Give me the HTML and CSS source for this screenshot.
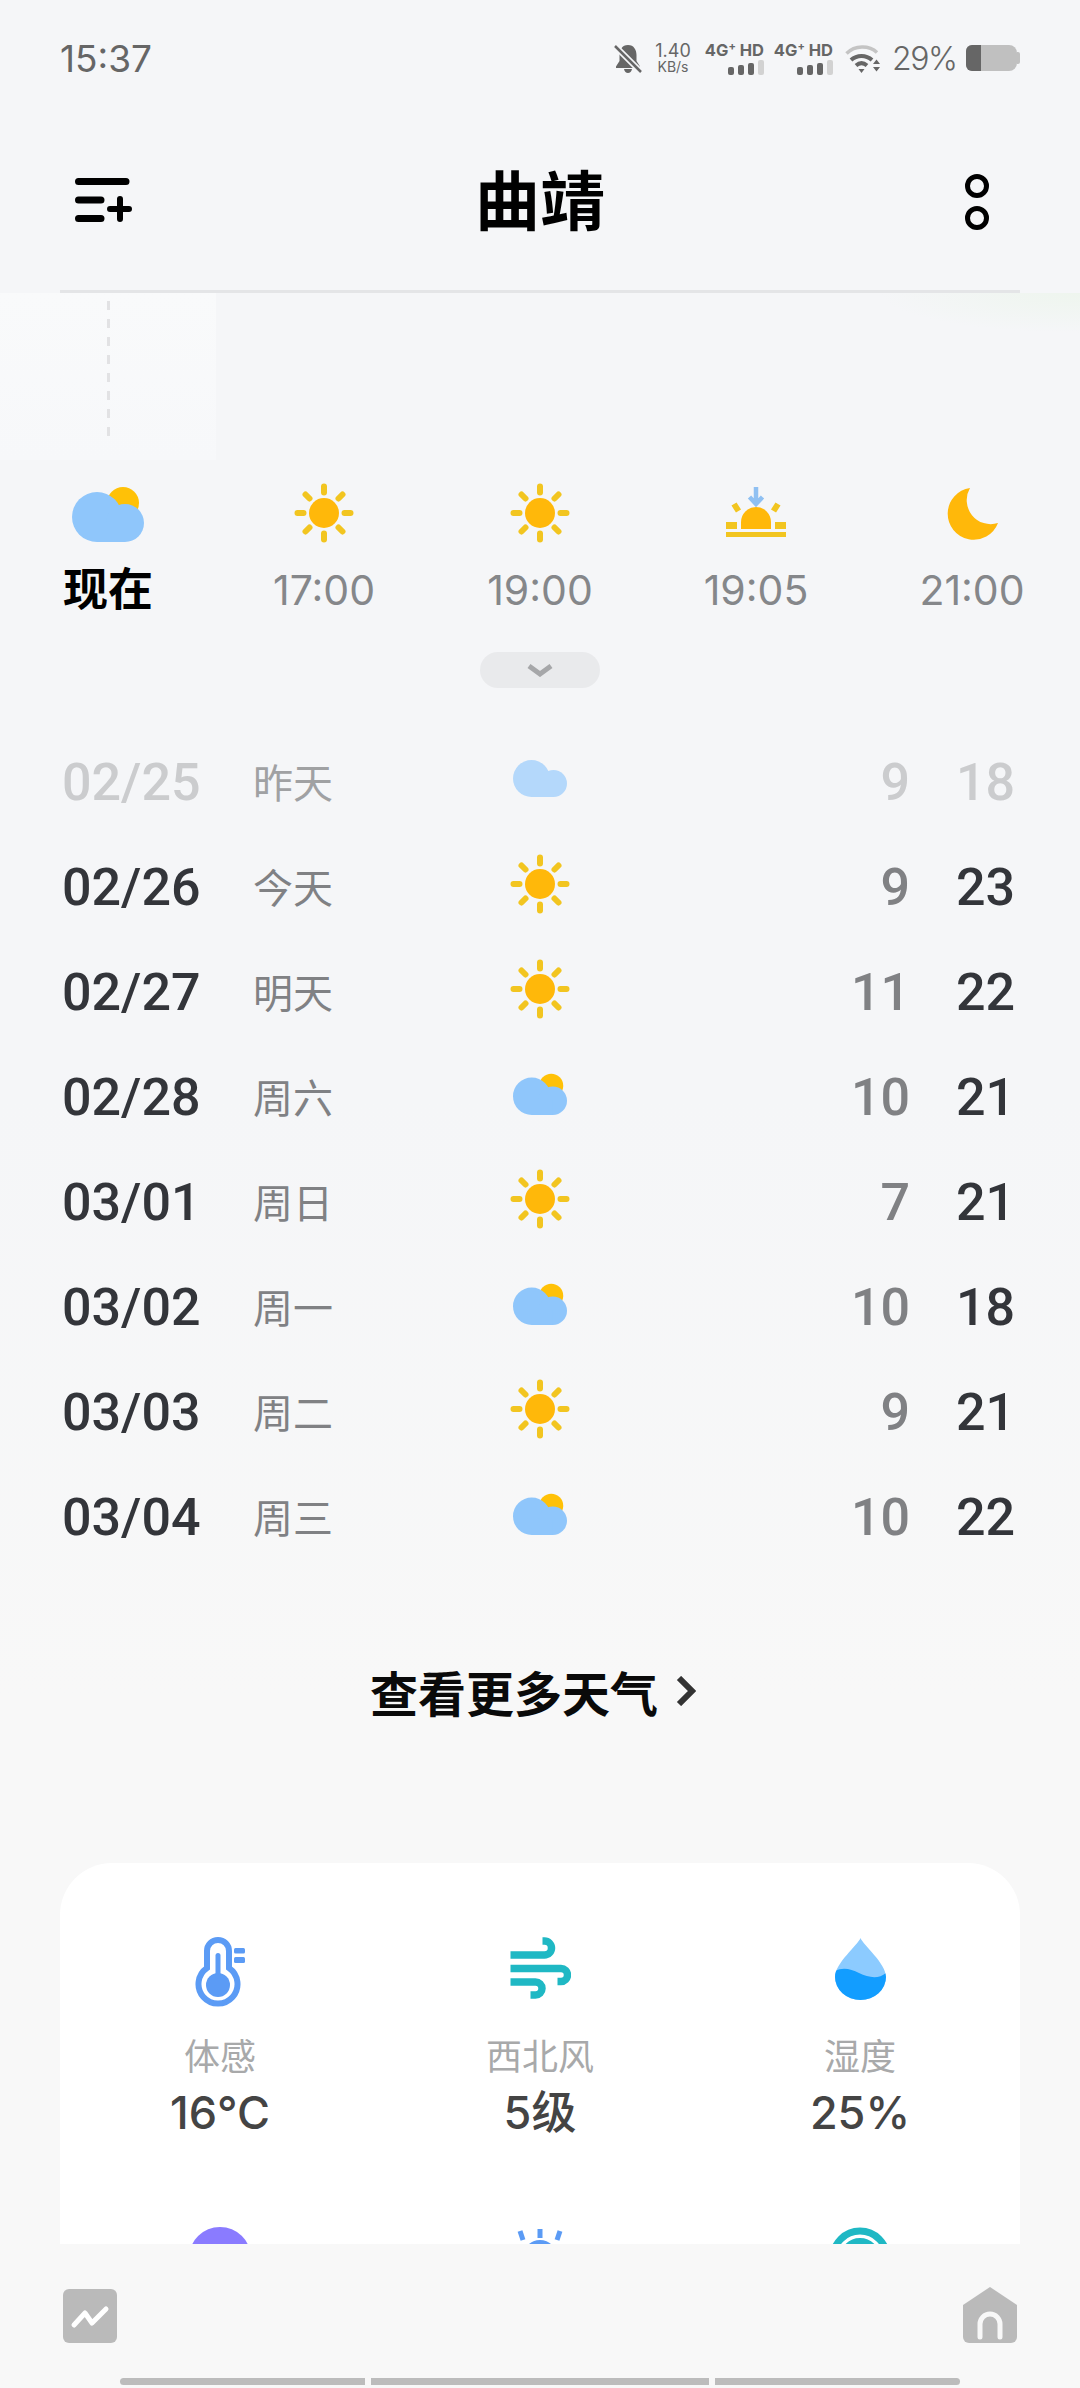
FILE: index.html
```html
<!DOCTYPE html>
<html lang="zh-CN">
<head>
    <meta charset="UTF-8">
    <meta name="viewport" content="width=device-width, initial-scale=1.0">
    <title>曲靖</title>
    <link rel="stylesheet" href="styles.css">
</head>
<body>
    <!-- shared weather glyphs -->
    <svg class="defs" width="0" height="0">
        <symbol id="sun" viewBox="0 0 60 60">
            <g stroke="#f2c520" stroke-width="6" stroke-linecap="round">
                <path d="M30 3.500V9.500M30 50.500V56.500M3.500 30H9.500M50.500 30H56.500M11.500 11.500L15.500 15.500M44.500 15.500L48.500 11.500M11.500 48.500L15.500 44.500M44.500 44.500L48.500 48.500"/>
            </g>
            <circle cx="30" cy="30" r="15" fill="#ffb80a"/>
        </symbol>
        <symbol id="cloudSun" viewBox="0 0 72 56">
            <circle cx="51" cy="17" r="16" fill="#ffc107"/>
            <g fill="#8fc6fb">
                <circle cx="25" cy="31" r="25"/>
                <circle cx="53" cy="37" r="19"/>
                <rect x="25" y="36" width="28" height="20"/>
            </g>
        </symbol>
        <symbol id="cloud" viewBox="0 0 54 37">
            <g fill="#b4d8fb">
                <circle cx="18.500" cy="18.500" r="18.500"/>
                <circle cx="40.500" cy="23.500" r="13.500"/>
                <rect x="18.500" y="20" width="22" height="17"/>
            </g>
        </symbol>
    </svg>

    <div class="page">
        <div class="statusBar">
            <span class="clock">15:37</span>
            <div class="statusIcons">
                <svg class="bell" width="28" height="29" viewBox="0 0 28 29">
                    <path fill="#666" d="M14 1C8 1 5.500 6 5.500 11V17L2 22.500V24H26V22.500L22.500 17V11C22.500 6 20 1 14 1ZM10 25C10.500 27.500 12 29 14 29C16 29 17.500 27.500 18 25Z"/>
                    <path stroke="#f5f6f8" stroke-width="6" d="M0 1L28 29"/>
                    <path stroke="#666" stroke-width="2.500" d="M1 2L27 28"/>
                </svg>
                <div class="netSpeed"><span>1.40</span><small>KB/s</small></div>
                <div class="sim">
                    <b>4G<sup>+</sup> HD</b>
                    <div class="bars"><i class="b1"></i><i class="b2"></i><i class="b3"></i><i class="b4"></i></div>
                </div>
                <div class="sim">
                    <b>4G<sup>+</sup> HD</b>
                    <div class="bars"><i class="b1"></i><i class="b2"></i><i class="b3"></i><i class="b4"></i></div>
                </div>
                <svg class="wifi" width="36" height="29" viewBox="0 0 36 29">
                    <path d="M1.500 9.500C10 1 24 1 32 8.500" fill="none" stroke="#c4c4c4" stroke-width="3.500"/>
                    <path d="M6 16C12 10.500 21 10.500 27 16M11 21.500C14.500 18.500 18.500 18.500 22 21.500" fill="none" stroke="#666" stroke-width="4"/>
                    <path d="M13.500 25H19.500L16.500 29ZM28 20H35L31.500 15.500ZM28 23H35L31.500 27.500Z" fill="#666"/>
                </svg>
                <span class="battText">29%</span>
                <div class="battery"><div class="battLevel"></div></div>
            </div>
        </div>

        <div class="topBar">
            <svg class="menuIcon" width="57" height="44" viewBox="0 0 57 44">
                <path stroke="#000" stroke-width="7" stroke-linecap="round" d="M3.500 3.500H51M3.500 22H26M3.500 40.500H26"/>
                <path stroke="#000" stroke-width="6" stroke-linecap="round" d="M35 31H54M45 21V41"/>
            </svg>
            <h1 class="cityName">曲靖</h1>
            <svg class="moreIcon" width="24" height="56" viewBox="0 0 24 56">
                <circle cx="12" cy="12" r="9.500" fill="none" stroke="#000" stroke-width="5"/>
                <circle cx="12" cy="44" r="9.500" fill="none" stroke="#000" stroke-width="5"/>
            </svg>
        </div>

        <div class="chart">
            <div class="chartNow"><div class="dashLine"></div></div>
        </div>

        <div class="hours">
            <div class="hour now">
                <svg width="72" height="56"><use href="#cloudSun"/></svg>
                <span>现在</span>
            </div>
            <div class="hour">
                <svg class="hourSun" width="60" height="60"><use href="#sun"/></svg>
                <span>17:00</span>
            </div>
            <div class="hour">
                <svg class="hourSun" width="60" height="60"><use href="#sun"/></svg>
                <span>19:00</span>
            </div>
            <div class="hour">
                <svg width="60" height="54" viewBox="0 0 60 54">
                    <path d="M30 1V16M23.500 11L30 18L36.500 11" fill="none" stroke="#8fc0f2" stroke-width="4.500"/>
                    <path d="M15 36A15 15 0 0 1 45 36V43H15Z" fill="#ffb80a"/>
                    <path d="M8 18L12.500 25M52 18L47.500 25" stroke="#f2c520" stroke-width="6"/>
                    <path d="M0 36H11V43H0ZM49 36H60V43H49ZM0 46H60V51H0Z" fill="#f2c520"/>
                </svg>
                <span>19:05</span>
            </div>
            <div class="hour">
                <svg width="52" height="56" viewBox="0 0 52 52"><path fill="#ffb80a" d="M24 0A26 26 0 1 0 52 35A24 24 0 0 1 24 0Z"/></svg>
                <span>21:00</span>
            </div>
        </div>

        <div class="toggleWrap">
            <div class="togglePill">
                <svg width="26" height="13" viewBox="0 0 26 13"><path d="M2 2L13 10L24 2" fill="none" stroke="#a6a7a9" stroke-width="5"/></svg>
            </div>
        </div>

        <div class="days">
            <div class="dayRow past">
                <span class="dayDate">02/25</span><span class="dayName">昨天</span>
                <span class="dayIcon"><svg width="54" height="37"><use href="#cloud"/></svg></span>
                <span class="dayLow">9</span><span class="dayHigh">18</span>
            </div>
            <div class="dayRow">
                <span class="dayDate">02/26</span><span class="dayName">今天</span>
                <span class="dayIcon"><svg width="60" height="60"><use href="#sun"/></svg></span>
                <span class="dayLow">9</span><span class="dayHigh">23</span>
            </div>
            <div class="dayRow">
                <span class="dayDate">02/27</span><span class="dayName">明天</span>
                <span class="dayIcon"><svg width="60" height="60"><use href="#sun"/></svg></span>
                <span class="dayLow">11</span><span class="dayHigh">22</span>
            </div>
            <div class="dayRow">
                <span class="dayDate">02/28</span><span class="dayName">周六</span>
                <span class="dayIcon"><svg width="54" height="42"><use href="#cloudSun"/></svg></span>
                <span class="dayLow">10</span><span class="dayHigh">21</span>
            </div>
            <div class="dayRow">
                <span class="dayDate">03/01</span><span class="dayName">周日</span>
                <span class="dayIcon"><svg width="60" height="60"><use href="#sun"/></svg></span>
                <span class="dayLow">7</span><span class="dayHigh">21</span>
            </div>
            <div class="dayRow">
                <span class="dayDate">03/02</span><span class="dayName">周一</span>
                <span class="dayIcon"><svg width="54" height="42"><use href="#cloudSun"/></svg></span>
                <span class="dayLow">10</span><span class="dayHigh">18</span>
            </div>
            <div class="dayRow">
                <span class="dayDate">03/03</span><span class="dayName">周二</span>
                <span class="dayIcon"><svg width="60" height="60"><use href="#sun"/></svg></span>
                <span class="dayLow">9</span><span class="dayHigh">21</span>
            </div>
            <div class="dayRow">
                <span class="dayDate">03/04</span><span class="dayName">周三</span>
                <span class="dayIcon"><svg width="54" height="42"><use href="#cloudSun"/></svg></span>
                <span class="dayLow">10</span><span class="dayHigh">22</span>
            </div>
        </div>

        <div class="moreWeather">
            <span>查看更多天气</span>
            <svg width="20" height="30" viewBox="0 0 20 30"><path d="M3 2L16 15L3 28" fill="none" stroke="#333" stroke-width="6"/></svg>
        </div>

        <div class="details">
            <div class="detailCard">
                <div class="detail">
                    <svg class="detailIcon" width="51" height="70" viewBox="0 0 51 70">
                        <path d="M12 31V14A11 11 0 0 1 34 14V31A19.500 19.500 0 1 1 12 31Z" fill="none" stroke="#5b9bf5" stroke-width="6"/>
                        <circle cx="23" cy="48" r="12" fill="#5b9bf5"/>
                        <rect x="20.500" y="16" width="5" height="26" rx="2.500" fill="#5b9bf5"/>
                        <rect x="39" y="11" width="11" height="5.500" rx="1.500" fill="#5b9bf5"/>
                        <rect x="39" y="20" width="11" height="6" rx="1.500" fill="#5b9bf5"/>
                    </svg>
                    <span class="detailLabel">体感</span>
                    <span class="detailValue">16°C</span>
                </div>
                <div class="detail">
                    <svg class="detailIcon" width="62" height="70" viewBox="-1.500 0 62 70">
                        <path d="M0 18H34A7 7 0 0 0 34 4H32M0 31.500H50.500A6.500 6.500 0 0 1 50.500 44.500H47M0 45H25A6.500 6.500 0 0 1 25 58H20" fill="none" stroke="#1fb8c4" stroke-width="7.500"/>
                    </svg>
                    <span class="detailLabel">西北风</span>
                    <span class="detailValue">5级</span>
                </div>
                <div class="detail">
                    <svg class="detailIcon" width="51" height="70" viewBox="0 0 51 70">
                        <clipPath id="dropClip"><path d="M25.500 1C23 8 0 26 0 40A25.500 23 0 0 0 51 40C51 26 28 8 25.500 1Z"/></clipPath>
                        <g clip-path="url(#dropClip)">
                            <rect width="51" height="70" fill="#8ccbff"/>
                            <path d="M0 34C8 30 16 32 24 36C34 41 44 42 51 36V70H0Z" fill="#129dff"/>
                        </g>
                    </svg>
                    <span class="detailLabel">湿度</span>
                    <span class="detailValue">25%</span>
                </div>
                <div class="detail">
                    <svg class="detailIcon" width="62" height="70" viewBox="0 0 62 70"><circle cx="31" cy="31" r="31" fill="#8a7bff"/></svg>
                </div>
                <div class="detail">
                    <svg class="detailIcon" width="62" height="70" viewBox="0 0 62 70">
                        <path d="M31 2V11M11 4L14 13M51 4L48 13" fill="none" stroke="#5b9bf5" stroke-width="5"/>
                        <circle cx="31" cy="30" r="17" fill="#5b9bf5"/>
                    </svg>
                </div>
                <div class="detail">
                    <svg class="detailIcon" width="62" height="70" viewBox="0 0 62 70">
                        <circle cx="31" cy="31" r="27" fill="none" stroke="#1fb8c4" stroke-width="7"/>
                        <circle cx="31" cy="31" r="17" fill="none" stroke="#1fb8c4" stroke-width="6"/>
                        <circle cx="31" cy="33" r="9" fill="#1fb8c4"/>
                    </svg>
                </div>
            </div>
        </div>

        <div class="bottomNav">
            <div class="navIcons">
                <svg width="54" height="54" viewBox="0 0 54 54">
                    <rect width="54" height="54" rx="6" fill="#bababa"/>
                    <path d="M11 36L22 24L29 34L43 20" fill="none" stroke="#fff" stroke-width="5" stroke-linecap="round" stroke-linejoin="round"/>
                </svg>
                <svg width="54" height="56" viewBox="0 0 54 56">
                    <path d="M27 0L54 18V50A6 6 0 0 1 48 56H6A6 6 0 0 1 0 50V18Z" fill="#bababa"/>
                    <path d="M17 50V37A10 10 0 0 1 37 37V50" fill="none" stroke="#f8f8f8" stroke-width="5" stroke-linecap="round"/>
                </svg>
            </div>
            <div class="homeBars"><i></i><i></i><i></i></div>
        </div>
    </div>
</body>
</html>
```

FILE: styles.css
```css
* {
    box-sizing: border-box;
}
body {
    margin: 0;
    font-family: Inter, "Noto Sans CJK SC", sans-serif;
}
.defs {
    position: absolute;
}
.page {
    width: 1080px;
    height: 2388px;
    display: flex;
    flex-direction: column;
    overflow: hidden;
    background: linear-gradient(#f5f6f8 0, #f5f6f8 1100px, #f8f8f8 1700px);
}

/* status bar */
.statusBar {
    height: 116px;
    flex: none;
    padding: 0 60px;
    display: flex;
    justify-content: space-between;
    align-items: center;
}
.clock {
    font-size: 37px;
    color: #666;
}
.statusIcons {
    display: flex;
    align-items: center;
    color: #666;
}
.bell {
    margin-right: 12px;
}
.netSpeed {
    width: 38px;
    margin-right: 14px;
    display: flex;
    flex-direction: column;
    align-items: center;
    font-size: 18px;
    line-height: 18px;
}
.netSpeed small {
    font-size: 14px;
    line-height: 14px;
}
.sim {
    width: 58px;
    margin-right: 11px;
    display: flex;
    flex-direction: column;
    align-items: flex-end;
    font-size: 16.500px;
    line-height: 16px;
}
.sim b {
    white-space: nowrap;
    font-weight: 700;
}
.sim sup {
    font-size: 11px;
    line-height: 0;
}
.bars {
    display: flex;
    align-items: flex-end;
    gap: 4px;
    height: 16px;
    margin-top: 1px;
}
.bars i {
    width: 6px;
    border-radius: 2px;
    background: #666;
}
.b1 { height: 8px; }
.b2 { height: 10px; }
.b3 { height: 12px; }
.bars .b4 {
    height: 15px;
    background: #d2d2d2;
}
.wifi {
    margin-left: 1px;
}
.battText {
    width: 64px;
    margin-left: 11px;
    font-size: 32px;
    font-weight: 300;
    letter-spacing: -1.500px;
    white-space: nowrap;
}
.battery {
    width: 51px;
    height: 26px;
    margin-left: 10px;
    margin-right: 3px;
    border-radius: 6px 8px 8px 6px;
    background: #c0c0c0;
    position: relative;
}
/* battery terminal */
.battery::after {
    content: "";
    position: absolute;
    top: 7px;
    right: -3px;
    width: 3px;
    height: 12px;
    border-radius: 0 2px 2px 0;
    background: #c0c0c0;
}
.battLevel {
    width: 15px;
    height: 100%;
    border-radius: 6px 0 0 6px;
    background: #666;
}

/* city header */
.topBar {
    height: 177px;
    flex: none;
    margin: 0 60px;
    padding: 0 31px;
    display: grid;
    grid-template-columns: 1fr auto 1fr;
    align-items: center;
    border-bottom: 3px solid #e4e5e7;
}
.cityName {
    margin: 0 0 2px;
    font-size: 65px;
    font-weight: 700;
    line-height: 80px;
    color: #000;
}
.menuIcon {
    margin-left: -16px;
    margin-bottom: 7px;
}
.moreIcon {
    margin-bottom: 2px;
    justify-self: end;
}

/* temperature chart strip */
.chart {
    height: 193px;
    flex: none;
    background: radial-gradient(ellipse 200px 40px at 100% 0, #eef5ee, transparent);
}
.chartNow {
    width: 216px;
    height: 167px;
    padding: 8px 0 0 107px;
    background: linear-gradient(#f9fafb, #f7f8fa);
}
.dashLine {
    width: 3px;
    height: 138px;
    background: repeating-linear-gradient(#e2e2e4 0, #e2e2e4 9px, transparent 9px, transparent 18px);
}

/* hourly forecast */
.hours {
    flex: none;
    display: grid;
    grid-template-columns: repeat(5, 216px);
}
.hour {
    height: 129px;
    display: flex;
    flex-direction: column;
    align-items: center;
    justify-content: space-between;
    font-size: 41px;
    line-height: 50px;
    color: #85878a;
}
.hour.now {
    color: #000;
    font-size: 45px;
    font-weight: 700;
}
.hourSun {
    margin-top: -3px;
}
.toggleWrap {
    height: 114px;
    flex: none;
    padding-top: 37px;
    display: flex;
    justify-content: center;
}
.togglePill {
    width: 120px;
    height: 36px;
    border-radius: 18px;
    background: #e9eaec;
    display: flex;
    align-items: center;
    justify-content: center;
}

/* daily forecast */
.dayRow {
    height: 105px;
    padding-top: 2px;
    padding-right: 65px;
    padding-left: 62px;
    display: grid;
    grid-template-columns: 191px 251px 72px 334px 105px;
    align-items: center;
    font-family: Roboto, "Noto Sans CJK SC", sans-serif;
    font-size: 52px;
    font-weight: 500;
    color: #33353a;
}
.dayName {
    margin-bottom: 4px;
    font-size: 40px;
    font-weight: 400;
    color: #808184;
}
.dayIcon {
    display: flex;
    justify-content: center;
    margin-bottom: 8px;
}
.dayLow {
    text-align: right;
    color: #808184;
}
.dayHigh {
    text-align: right;
}
.past .dayDate,
.past .dayLow,
.past .dayHigh {
    color: #cbccce;
}
.past .dayName {
    color: #a0a1a3;
}

.moreWeather {
    height: 246px;
    flex: none;
    padding-right: 14px;
    padding-bottom: 2px;
    display: flex;
    justify-content: center;
    align-items: center;
    gap: 18px;
    font-size: 48px;
    font-weight: 700;
    color: #0a0a0a;
}

/* detail card, cut off by the bottom nav */
.details {
    flex: 1;
    min-height: 0;
    padding: 48px 60px 0;
    overflow: hidden;
}
.detailCard {
    height: 800px;
    padding-top: 74px;
    border-radius: 52px 52px 0 0;
    background: #fff;
    display: grid;
    grid-template-columns: repeat(3, 1fr);
    grid-auto-rows: 201px;
    row-gap: 89px;
}
.detail {
    display: flex;
    flex-direction: column;
    align-items: center;
}
.detailIcon {
    flex: none;
}
.detailLabel {
    margin-top: 25px;
    font-size: 36px;
    line-height: 50px;
    color: #a8a9aa;
}
.detailValue {
    margin-top: 3px;
    font-size: 45px;
    font-weight: 500;
    line-height: 56px;
    color: #444;
}

/* bottom nav */
.bottomNav {
    height: 144px;
    flex: none;
    background: #f8f8f8;
    padding-top: 43px;
}
.navIcons {
    height: 56px;
    padding: 0 63px;
    display: flex;
    justify-content: space-between;
    align-items: flex-end;
}
.homeBars {
    margin: 35px 120px 0;
    display: flex;
    gap: 6px;
}
.homeBars i {
    height: 7px;
    background: #bcbcbc;
    flex: 245;
}
.homeBars i:nth-child(2) {
    flex: 338;
}
.homeBars i:first-child {
    border-radius: 4px 0 0 4px;
}
.homeBars i:last-child {
    border-radius: 0 4px 4px 0;
}
```
